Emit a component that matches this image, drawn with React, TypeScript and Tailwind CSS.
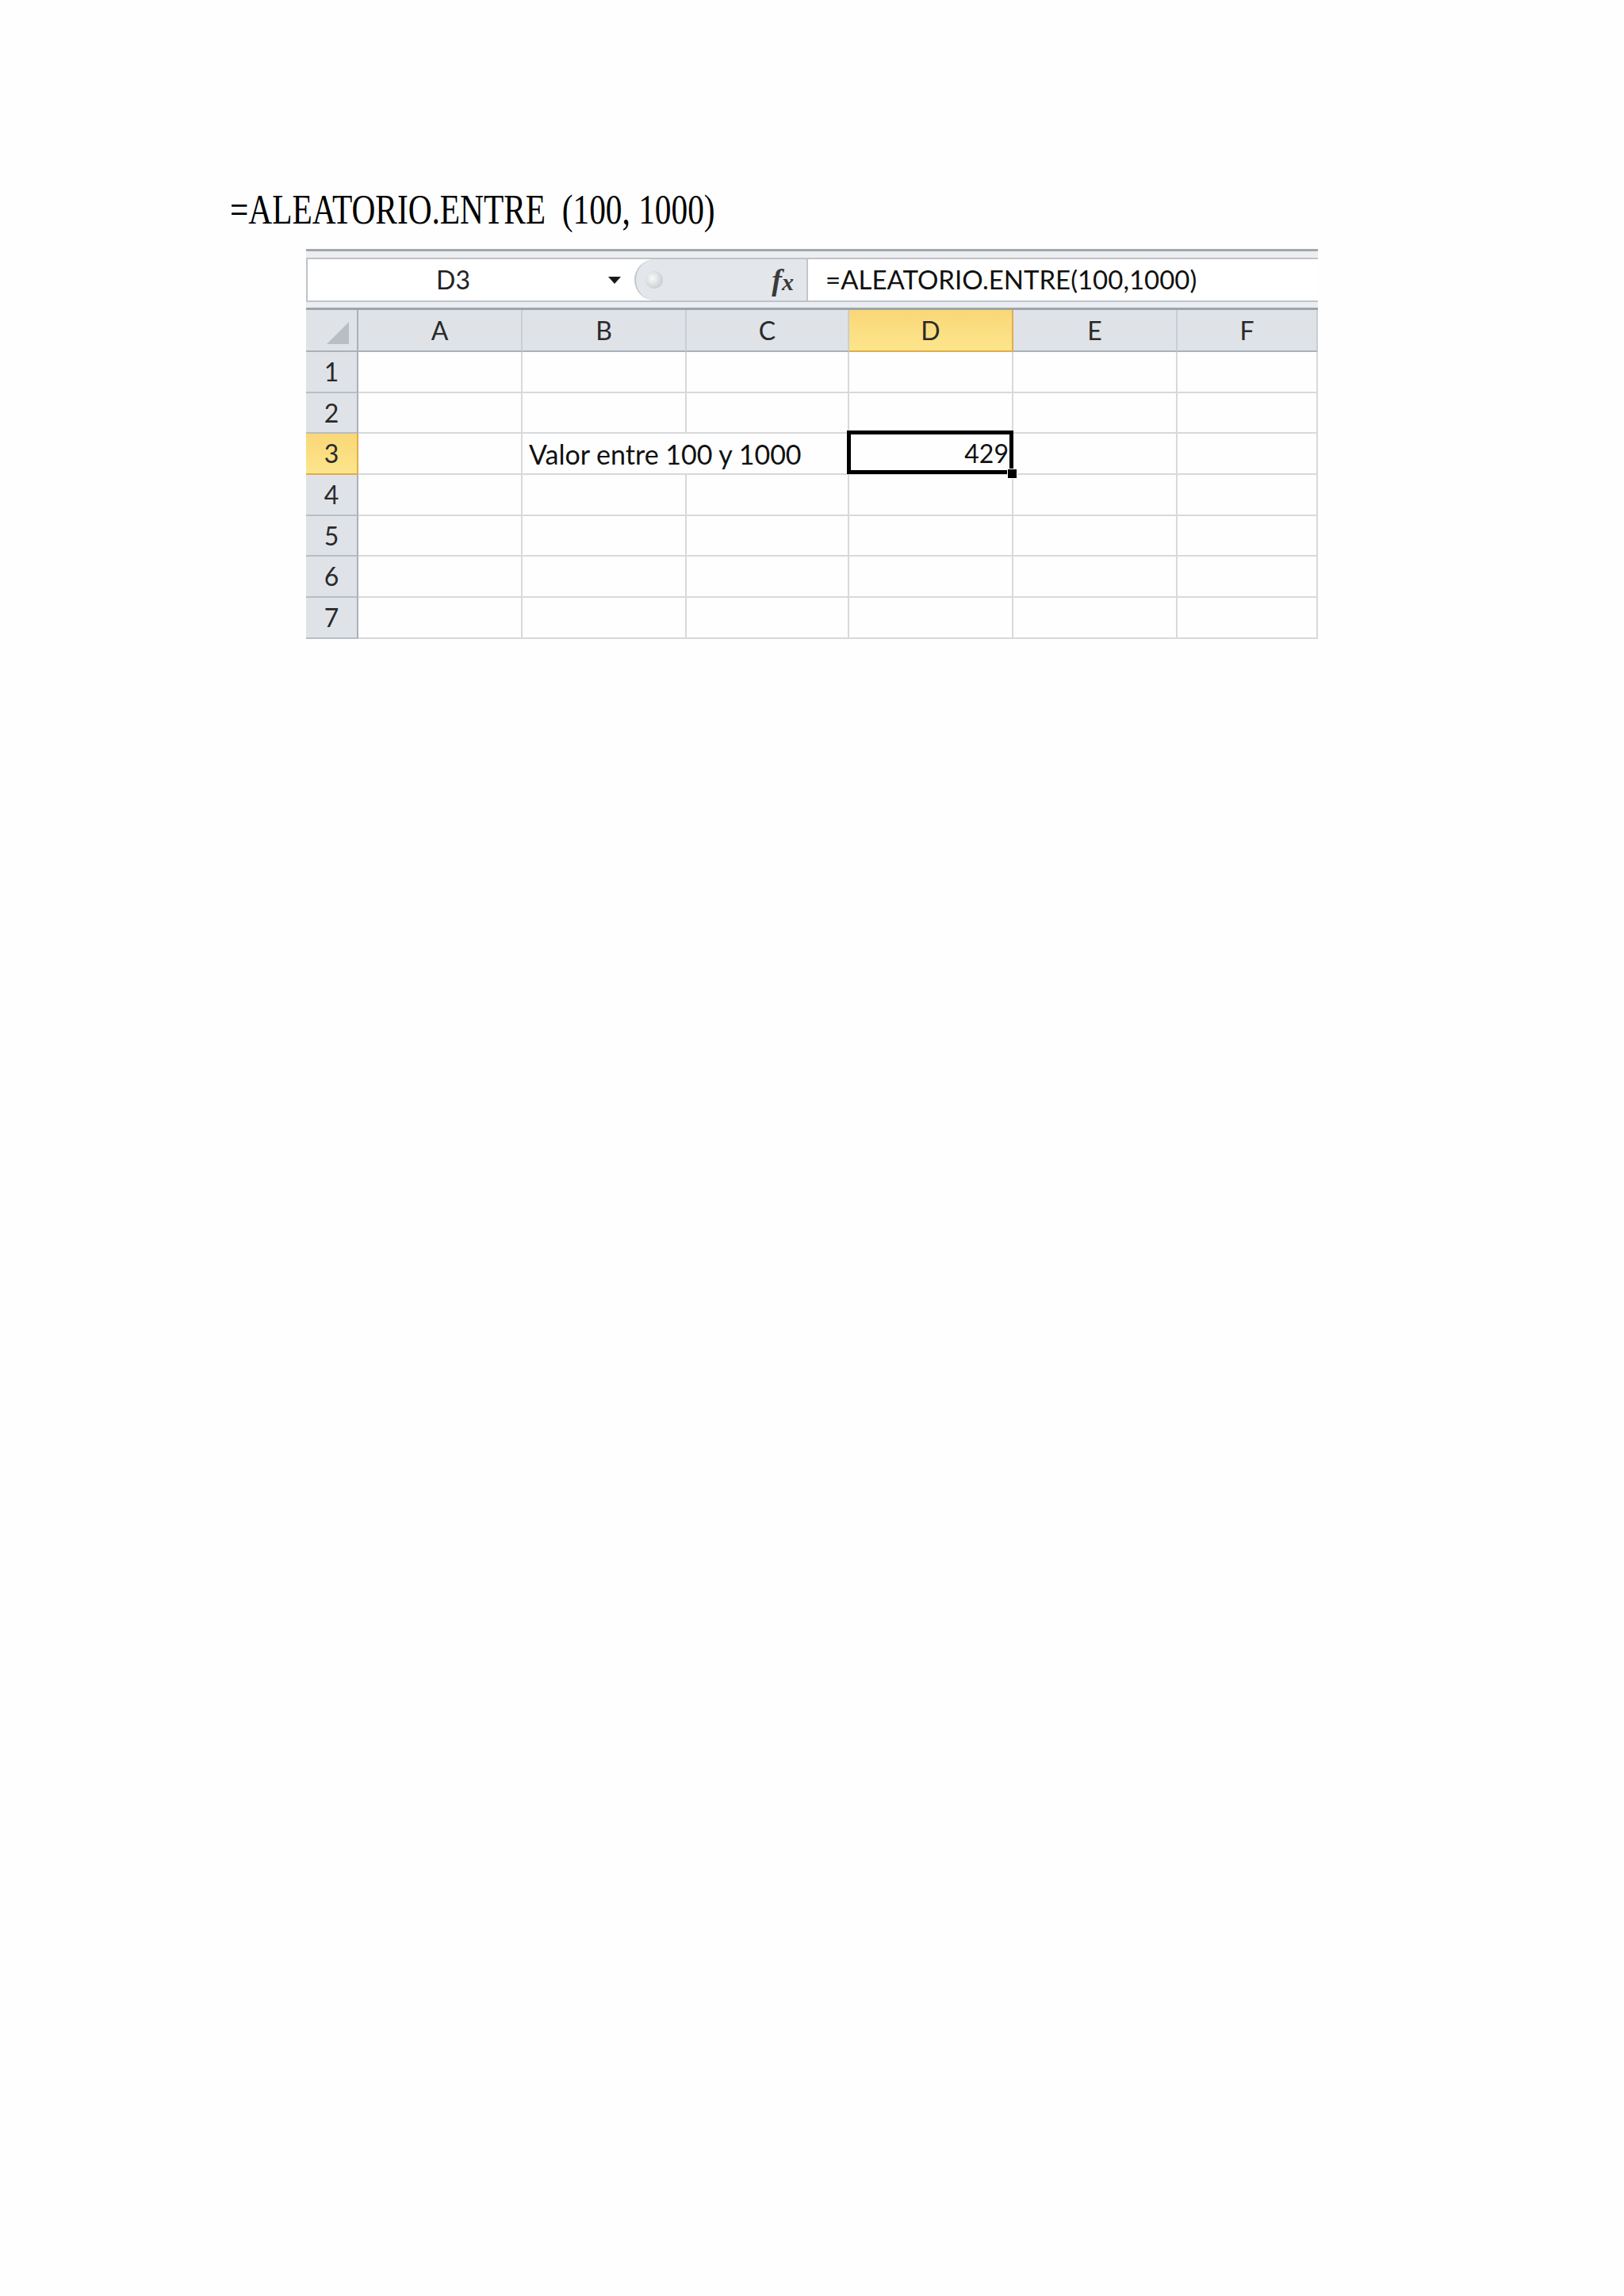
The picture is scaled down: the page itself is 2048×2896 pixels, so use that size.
const cols = ['A', 'B', 'C', 'D', 'E', 'F'];
const rows = [1, 2, 3, 4, 5, 6, 7];

const cellFont = { fontFamily: 'Lato, "Open Sans", sans-serif' };

function ColumnHeader({ label, active }: { label: string; active?: boolean }) {
  return (
    <div
      className={
        active
          ? 'flex items-center justify-center border-r-2 border-b-2 border-[#e2ad48] bg-[linear-gradient(#f9d777,#fde58c)] text-[32px] text-[#2a2a2a]'
          : 'flex items-center justify-center border-r-2 border-b-2 border-r-[#c9ced4] border-b-[#a9b1ba] bg-[#dfe3e8] text-[32px] text-[#2a2a2a]'
      }
    >
      {label}
    </div>
  );
}

function RowHeader({ n, active }: { n: number; active?: boolean }) {
  return (
    <div
      className={
        active
          ? 'flex items-center justify-center border-r-2 border-b-2 border-[#e2ad48] bg-[linear-gradient(#f9d777,#fde58c)] text-[32px] text-[#2a2a2a]'
          : 'flex items-center justify-center border-r-2 border-b-2 border-r-[#a9b1ba] border-b-[#b6bec6] bg-[#dfe3e8] text-[32px] text-[#2a2a2a]'
      }
    >
      {n}
    </div>
  );
}

function Cell({ row, col }: { row: number; col: string }) {
  if (row === 3 && col === 'B') {
    return (
      <div className="relative z-10 flex items-center whitespace-nowrap border-b-2 border-[#d8d9db] pl-[8px] text-[34px] text-[#111]">
        Valor entre 100 y 1000
      </div>
    );
  }
  if (row === 3 && col === 'D') {
    return (
      <div className="relative flex items-center justify-end border-r-2 border-b-2 border-[#d8d9db] pr-[4px] text-[32px] text-[#111]">
        429
        {/* active cell frame with the fill handle */}
        <div className="absolute -left-[3px] -top-[4px] -right-[2px] -bottom-[1px] z-20 border-[5px] border-black" />
        <div className="absolute -right-[7px] -bottom-[7px] z-30 h-[13px] w-[13px] border border-white bg-black" />
      </div>
    );
  }
  return <div className="border-r-2 border-b-2 border-[#d8d9db]" />;
}

function FormulaBar() {
  return (
    <div className="flex flex-col">
      <div className="h-[3px] bg-[#a3a6aa]" />
      <div className="h-[8px] bg-[#eceef0]" />
      <div className="flex h-[56px] border-y-2 border-[#bfc3c7] bg-white">
        {/* name box */}
        <div className="flex w-[414px] items-center border-l-2 border-[#bfc3c7]">
          <span className="flex-1 pr-[12px] text-center text-[32px] text-[#222]">D3</span>
          <svg width="16" height="9" viewBox="0 0 16 9" className="mr-[17px]">
            <path d="M0 0 H16 L8 9 Z" fill="#1a1a1a" />
          </svg>
        </div>
        {/* grip capsule with fx */}
        <div className="relative flex w-[217px] items-center justify-end rounded-l-[28px] border-l-2 border-[#c2c6cb] bg-[#e3e6ea] pr-[16px]">
          <div className="absolute left-[12px] top-1/2 h-[22px] w-[22px] -translate-y-1/2 rounded-full bg-[radial-gradient(circle_at_40%_40%,#fafafa,#b9bec4)]" />
          <span
            className="text-[38px] font-bold italic leading-none text-[#3a3a3a]"
            style={{ fontFamily: '"Liberation Serif", serif' }}
          >
            f<span className="text-[30px]">x</span>
          </span>
        </div>
        <div className="flex flex-1 items-center border-l-2 border-[#c2c6cb] pl-[22px] text-[33px] text-[#111]">
          =ALEATORIO.ENTRE(100,1000)
        </div>
      </div>
      <div className="h-[7px] bg-[#eaedf1]" />
      <div className="h-[3px] bg-[#9ea4aa]" />
    </div>
  );
}

export default function App() {
  return (
    <div className="min-h-[2896px] w-[2048px] bg-[#fefefe] pl-[290px] pt-[238px]">
      <h1
        className="origin-left scale-x-[0.78] whitespace-pre text-[53px] leading-none text-black"
        style={{ fontFamily: '"Liberation Serif", "Times New Roman", serif' }}
      >
        =ALEATORIO.ENTRE  (100, 1000)
      </h1>

      <div className="ml-[96px] mt-[23px] w-[1276px]" style={cellFont}>
        <FormulaBar />
        <div className="grid grid-cols-[66px_207px_207px_205px_207px_207px_177px] grid-rows-[53px] auto-rows-[51.7px]">
          <div className="flex items-end justify-end border-r-2 border-b-2 border-r-[#a9b1ba] border-b-[#a9b1ba] bg-[#dfe3e8] pb-[8px] pr-[10px]">
            <svg width="28" height="28" viewBox="0 0 28 28">
              <path d="M28 0 V28 H0 Z" fill="#b9bec4" />
            </svg>
          </div>
          {cols.map((c) => (
            <ColumnHeader key={c} label={c} active={c === 'D'} />
          ))}
          {rows.map((r) => (
            <>
              <RowHeader key={'h' + r} n={r} active={r === 3} />
              {cols.map((c) => (
                <Cell key={c + r} row={r} col={c} />
              ))}
            </>
          ))}
        </div>
      </div>
    </div>
  );
}
